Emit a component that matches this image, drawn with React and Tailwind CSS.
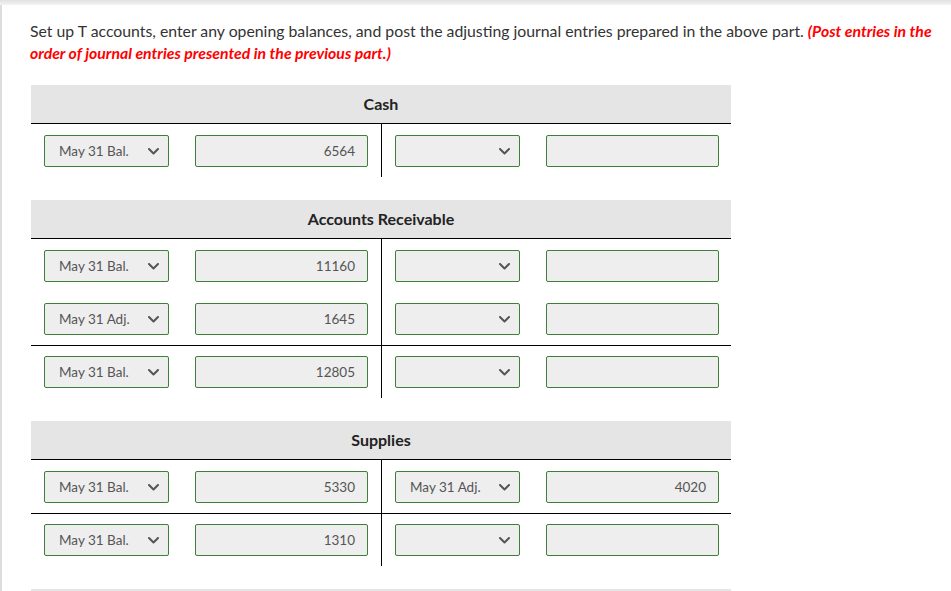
function Chevron() {
  return (
    <svg className="w-[11px] h-[7px]" viewBox="0 0 11 7" fill="none">
      <path d="M1 1l4.5 4.5L10 1" stroke="#555" strokeWidth="2" strokeLinecap="round" strokeLinejoin="round" />
    </svg>
  );
}

function Select({ value }) {
  return (
    <div className="w-[125px] h-[32px] shrink-0 flex items-center justify-between pl-[14px] pr-[9px] border border-[#3f7f3a] rounded-[2px] bg-[#eeeeee] text-[13.5px] text-[#555]">
      <span>{value}</span>
      <Chevron />
    </div>
  );
}

function Amount({ value }) {
  return (
    <div className="w-[173px] h-[32px] shrink-0 flex items-center justify-end pr-[12px] border border-[#3f7f3a] rounded-[2px] bg-[#eeeeee] text-[13.5px] text-[#555]">
      {value}
    </div>
  );
}

function Row({ left, right, line }) {
  return (
    <div className={"flex h-[53px] " + (line ? "border-t border-black" : "")}>
      <div className={"w-[351px] flex gap-[26px] pl-[13px] border-r border-black " + (line ? "pt-[10px]" : "pt-[11px]")}>
        <Select value={left[0]} />
        <Amount value={left[1]} />
      </div>
      <div className={"flex-1 flex gap-[26px] pl-[13px] " + (line ? "pt-[10px]" : "pt-[11px]")}>
        <Select value={right[0]} />
        <Amount value={right[1]} />
      </div>
    </div>
  );
}

function Account({ title, rows }) {
  return (
    <div className="w-[700px] mb-[23px]">
      <div className="h-[39px] bg-[#e5e5e5] border-b border-black flex items-center justify-center font-bold text-[16px] text-[#222]">
        {title}
      </div>
      {rows.map((r, i) => (
        <Row key={i} left={r.left} right={r.right} line={r.line} />
      ))}
    </div>
  );
}

export default function App() {
  const accounts = [
    { title: "Cash", rows: [{ left: ["May 31 Bal.", "6564"], right: ["", ""] }] },
    {
      title: "Accounts Receivable",
      rows: [
        { left: ["May 31 Bal.", "11160"], right: ["", ""] },
        { left: ["May 31 Adj.", "1645"], right: ["", ""] },
        { left: ["May 31 Bal.", "12805"], right: ["", ""], line: true },
      ],
    },
    {
      title: "Supplies",
      rows: [
        { left: ["May 31 Bal.", "5330"], right: ["May 31 Adj.", "4020"] },
        { left: ["May 31 Bal.", "1310"], right: ["", ""], line: true },
      ],
    },
    { title: "", rows: [] },
  ];

  return (
    <div className="w-[951px] h-[591px] overflow-hidden bg-white" style={{ fontFamily: "Lato, 'Open Sans', sans-serif" }}>
      <div className="h-[5px] bg-gradient-to-b from-[#e2e2e2] to-[#f3f3f3]" />
      <div className="border-l-2 border-[#dcdcdc] pl-[29px] pt-[15px] h-full">
        <p className="text-[15.8px] leading-[22px] text-[#333] pr-[18px] -ml-[1px]">
          Set up T accounts, enter any opening balances, and post the adjusting journal entries prepared in the above part.{" "}
          <span className="font-bold italic text-[#ff0000]">(Post entries in the order of journal entries presented in the previous part.)</span>
        </p>
        <div className="mt-[21px]">
          {accounts.map((a, i) => (
            <Account key={i} title={a.title} rows={a.rows} />
          ))}
        </div>
      </div>
    </div>
  );
}
